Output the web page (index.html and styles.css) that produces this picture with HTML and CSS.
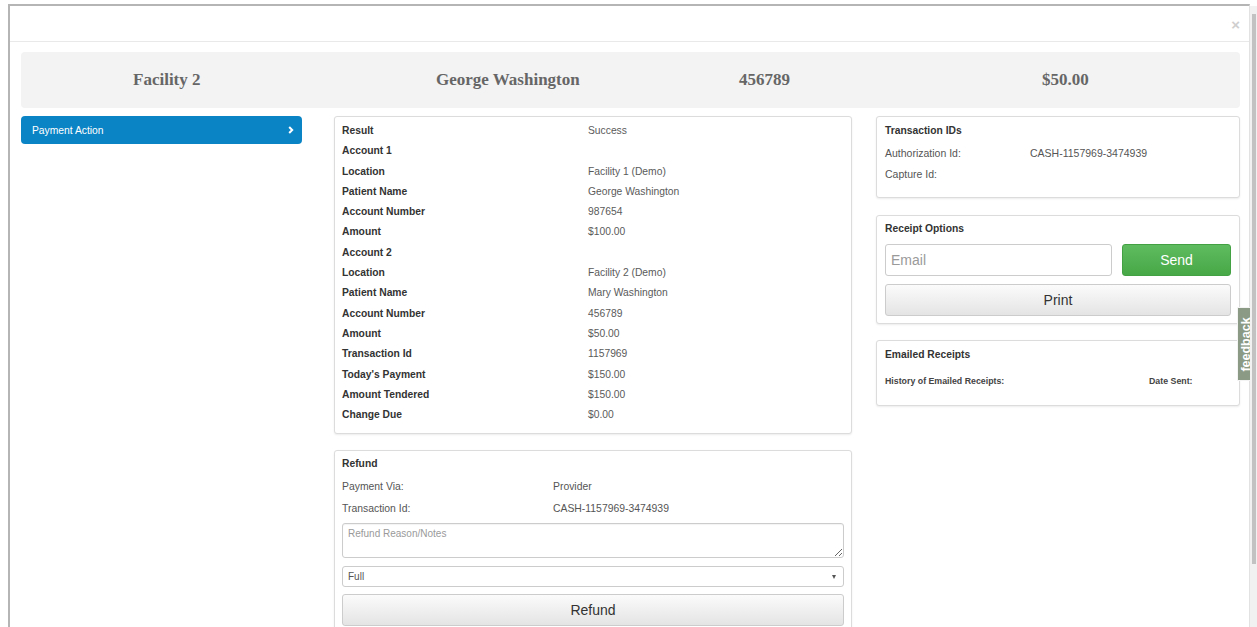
FILE: index.html
```html
<!DOCTYPE html>
<html lang="en">
<head>
<meta charset="utf-8">
<title>Payment Action</title>
<link rel="stylesheet" href="styles.css">
</head>
<body>
<div class="page">
  <div class="modal">
    <div class="modal-header">
      <button class="close" type="button">&times;</button>
    </div>
    <div class="modal-body">
      <div class="summary">
        <div class="summary-item">Facility 2</div>
        <div class="summary-item">George Washington</div>
        <div class="summary-item">456789</div>
        <div class="summary-item">$50.00</div>
      </div>

      <div class="layout">
        <nav class="side">
          <a class="side-link" href="#">
            <span>Payment Action</span>
            <svg class="chev" width="6" height="8" viewBox="0 0 6 8"><polyline points="1.2,1 4.2,4 1.2,7" fill="none" stroke="#fff" stroke-width="2"/></svg>
          </a>
        </nav>

        <div class="col">
          <section class="panel details">
            <div class="kv"><span class="k">Result</span><span class="v">Success</span></div>
            <div class="kv"><span class="k">Account 1</span><span class="v"></span></div>
            <div class="kv"><span class="k">Location</span><span class="v">Facility 1 (Demo)</span></div>
            <div class="kv"><span class="k">Patient Name</span><span class="v">George Washington</span></div>
            <div class="kv"><span class="k">Account Number</span><span class="v">987654</span></div>
            <div class="kv"><span class="k">Amount</span><span class="v">$100.00</span></div>
            <div class="kv"><span class="k">Account 2</span><span class="v"></span></div>
            <div class="kv"><span class="k">Location</span><span class="v">Facility 2 (Demo)</span></div>
            <div class="kv"><span class="k">Patient Name</span><span class="v">Mary Washington</span></div>
            <div class="kv"><span class="k">Account Number</span><span class="v">456789</span></div>
            <div class="kv"><span class="k">Amount</span><span class="v">$50.00</span></div>
            <div class="kv"><span class="k">Transaction Id</span><span class="v">1157969</span></div>
            <div class="kv"><span class="k">Today's Payment</span><span class="v">$150.00</span></div>
            <div class="kv"><span class="k">Amount Tendered</span><span class="v">$150.00</span></div>
            <div class="kv"><span class="k">Change Due</span><span class="v">$0.00</span></div>
          </section>

          <section class="panel refund">
            <h4 class="panel-title">Refund</h4>
            <div class="info"><span>Payment Via:</span><span>Provider</span></div>
            <div class="info"><span>Transaction Id:</span><span>CASH-1157969-3474939</span></div>
            <textarea class="notes" placeholder="Refund Reason/Notes"></textarea>
            <div class="select-wrap">
              <select class="select">
                <option>Full</option>
                <option>Partial</option>
              </select>
            </div>
            <button class="btn btn-default btn-block btn-refund" type="button">Refund</button>
          </section>
        </div>

        <div class="col">
          <section class="panel txn">
            <h4 class="panel-title">Transaction IDs</h4>
            <div class="info"><span>Authorization Id:</span><span>CASH-1157969-3474939</span></div>
            <div class="info"><span>Capture Id:</span><span></span></div>
          </section>

          <section class="panel receipt">
            <h4 class="panel-title">Receipt Options</h4>
            <div class="send-row">
              <input class="email" type="text" placeholder="Email">
              <button class="btn btn-success" type="button">Send</button>
            </div>
            <button class="btn btn-default btn-block btn-print" type="button">Print</button>
          </section>

          <section class="panel emailed">
            <h4 class="panel-title">Emailed Receipts</h4>
            <div class="history"><span>History of Emailed Receipts:</span><span>Date Sent:</span></div>
          </section>
        </div>
      </div>
    </div>
  </div>

  <div class="feedback"><span>feedback</span></div>
  <div class="scrollbar"><div class="thumb"></div></div>
</div>
</body>
</html>
```

FILE: styles.css
```css
html, body {
  margin: 0;
  padding: 0;
  background: #fff;
}

body {
  font-family: "Liberation Sans", Arial, Helvetica, sans-serif;
  color: #333;
}

.page {
  position: relative;
  height: 627px;
  overflow: hidden;
  padding: 4px 0 0 8px;
  box-sizing: border-box;
}

/* dialog frame */
.modal {
  width: 1242px;
  box-sizing: border-box;
  border-top: 2px solid #b5b5b5;
  border-left: 2px solid #b5b5b5;
  border-right: 1px solid #e2e2e2;
  background: #fff;
  height: 640px;
}

.modal-header {
  height: 35px;
  border-bottom: 1px solid #e9e9e9;
  display: flex;
  justify-content: flex-end;
  align-items: center;
  padding-right: 9px;
}

.close {
  border: 0;
  background: none;
  padding: 0;
  margin-top: 2px;
  font-family: "Liberation Sans", Arial, sans-serif;
  font-size: 15px;
  font-weight: bold;
  color: #cfcfcf;
  line-height: 1;
  cursor: pointer;
}

.modal-body {
  padding: 10px 9px 0 11px;
}

/* account summary strip */
.summary {
  height: 56px;
  background: #f3f3f3;
  border-radius: 4px;
  display: grid;
  grid-template-columns: repeat(4, 303px);
  align-items: center;
}

.summary-item {
  padding-left: 112px;
  font-family: "Liberation Serif", "Times New Roman", serif;
  font-weight: bold;
  font-size: 17px;
  color: #666;
  white-space: nowrap;
}

/* three column area */
.layout {
  margin-top: 8px;
  display: grid;
  grid-template-columns: 289px 518px 364px;
  column-gap: 24px;
  align-items: start;
}

.side {
  padding-right: 8px;
}

.side-link {
  height: 28px;
  box-sizing: border-box;
  display: flex;
  align-items: center;
  justify-content: space-between;
  padding: 0 8px 0 11px;
  background: #0b84c6;
  border-radius: 4px;
  color: #fff;
  font-size: 10.3px;
  text-decoration: none;
}

.chev {
  display: block;
}

.col {
  display: flex;
  flex-direction: column;
}

.panel {
  background: #fff;
  border: 1px solid #dcdcdc;
  border-radius: 3px;
  box-shadow: 0 1px 2px rgba(0, 0, 0, 0.08);
}

.panel-title {
  margin: 0;
  font-size: 10.3px;
  font-weight: bold;
  line-height: 14px;
  color: #333;
}

/* payment details */
.details {
  padding: 4px 7px 8px 7px;
}

.kv {
  display: grid;
  grid-template-columns: 246px 1fr;
  line-height: 20.3px;
  font-size: 10.3px;
}

.kv .k {
  font-weight: bold;
  color: #333;
}

.kv .v {
  color: #5a5a5a;
}

.info {
  display: grid;
  font-size: 10.4px;
  color: #555;
}

/* refund */
.refund {
  margin-top: 16px;
  padding: 6px 7px 7px 7px;
}

.refund .panel-title {
  margin-bottom: 5px;
}

.refund .info {
  grid-template-columns: 211px 1fr;
  line-height: 22px;
}

.notes {
  display: block;
  box-sizing: border-box;
  width: 100%;
  height: 35px;
  margin-top: 3px;
  padding: 4px 5px;
  border: 1px solid #ccc;
  border-radius: 3px;
  font-family: "Liberation Sans", Arial, sans-serif;
  font-size: 10px;
  color: #555;
  box-shadow: inset 0 1px 1px rgba(0, 0, 0, 0.05);
}

.notes::placeholder {
  color: #9a9a9a;
}

.select-wrap {
  position: relative;
  margin-top: 8px;
}

.select {
  display: block;
  appearance: none;
  -webkit-appearance: none;
  box-sizing: border-box;
  width: 100%;
  height: 21px;
  padding: 0 5px;
  border: 1px solid #ccc;
  border-radius: 3px;
  background: #fff;
  font-family: "Liberation Sans", Arial, sans-serif;
  font-size: 10px;
  color: #555;
}

.select-wrap::after {
  content: "";
  position: absolute;
  right: 8px;
  top: 9px;
  border-left: 2.5px solid transparent;
  border-right: 2.5px solid transparent;
  border-top: 4px solid #555;
  pointer-events: none;
}

/* buttons */
.btn {
  box-sizing: border-box;
  height: 32px;
  border-radius: 3px;
  font-family: "Liberation Sans", Arial, sans-serif;
  font-size: 14px;
  cursor: pointer;
}

.btn-block {
  display: block;
  width: 100%;
}

.btn-default {
  border: 1px solid #ccc;
  background: linear-gradient(#fbfbfb, #e4e4e4);
  color: #333;
}

.btn-success {
  border: 1px solid #43a043;
  background: linear-gradient(#5fbb5f, #47a847);
  color: #fff;
}

.btn-refund {
  margin-top: 7px;
}

/* right column */
.txn {
  padding: 7px 8px 12px 8px;
}

.txn .panel-title {
  margin-bottom: 5px;
}

.txn .info {
  grid-template-columns: 145px 1fr;
  line-height: 21px;
  font-size: 10.5px;
}

.receipt {
  margin-top: 17px;
  padding: 6px 8px 7px 8px;
}

.receipt .panel-title {
  margin-bottom: 8px;
}

.send-row {
  display: grid;
  grid-template-columns: 1fr 109px;
  column-gap: 10px;
}

.email {
  box-sizing: border-box;
  height: 32px;
  padding: 0 5px;
  border: 1px solid #ccc;
  border-radius: 3px;
  font-family: "Liberation Sans", Arial, sans-serif;
  font-size: 14px;
  color: #555;
  min-width: 0;
}

.email::placeholder {
  color: #9a9a9a;
}

.btn-print {
  margin-top: 8px;
}

.emailed {
  margin-top: 16px;
  padding: 7px 8px 17px 8px;
}

.history {
  margin-top: 12px;
  display: grid;
  grid-template-columns: 264px 1fr;
  line-height: 14px;
  font-size: 8.8px;
  font-weight: bold;
  color: #444;
}

/* floating feedback tab */
.feedback {
  position: absolute;
  left: 1237px;
  top: 307px;
  width: 19px;
  height: 74px;
  box-sizing: border-box;
  border: 1px solid #f4f4f4;
  background: #8b9a85;
  display: flex;
  align-items: center;
  justify-content: center;
  overflow: visible;
}

.feedback span {
  display: block;
  color: #fff;
  font-size: 12.5px;
  font-weight: bold;
  line-height: 15px;
  white-space: nowrap;
  transform: rotate(-90deg);
}

/* page scrollbar */
.scrollbar {
  position: absolute;
  left: 1250px;
  top: 6px;
  width: 7px;
  height: 621px;
  background: #f1f1f1;
}

.scrollbar .thumb {
  margin: 8px 0 0 2px;
  width: 4px;
  height: 550px;
  background: #c2c2c2;
}
```
